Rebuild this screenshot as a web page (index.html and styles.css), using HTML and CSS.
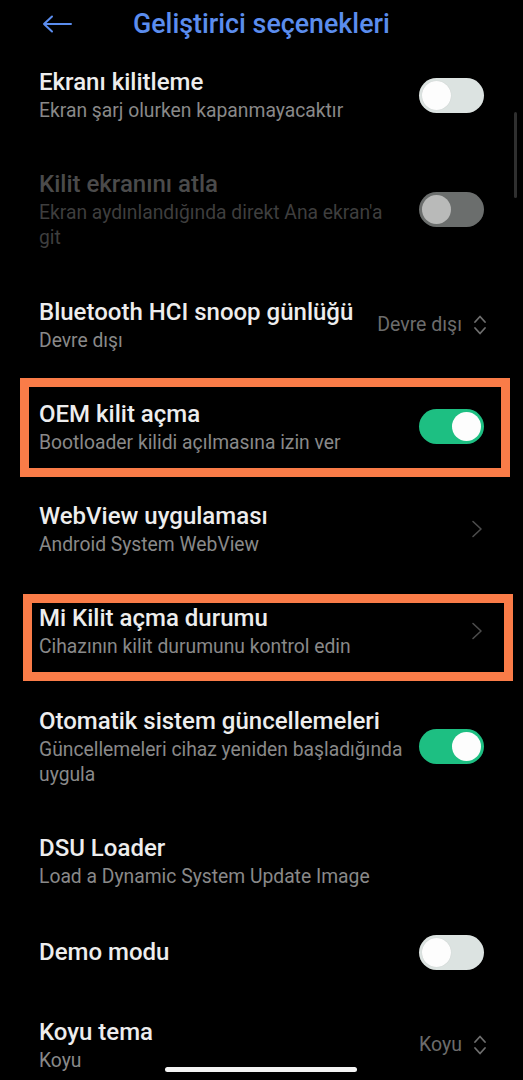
FILE: index.html
```html
<!DOCTYPE html>
<html lang="tr">
<head>
<meta charset="utf-8">
<title>Geliştirici seçenekleri</title>
<link rel="stylesheet" href="styles.css">
</head>
<body>
<div class="screen">
  <header class="topbar">
    <svg class="back" width="30" height="18" viewBox="0 0 30 18" aria-hidden="true">
      <path d="M2 9 H29 M10 1.5 L2 9 L10 16.5" fill="none" stroke="#5b8dee" stroke-width="2" stroke-linecap="round" stroke-linejoin="round"/>
    </svg>
    <h1 class="page-title">Geliştirici seçenekleri</h1>
  </header>

  <ul class="list">
    <li class="row">
      <div class="text">
        <div class="title">Ekranı kilitleme</div>
        <div class="sub">Ekran şarj olurken kapanmayacaktır</div>
      </div>
      <span class="switch off"><span class="knob"></span></span>
    </li>
    <li class="row disabled">
      <div class="text">
        <div class="title">Kilit ekranını atla</div>
        <div class="sub">Ekran aydınlandığında direkt Ana ekran'a git</div>
      </div>
      <span class="switch dis"><span class="knob"></span></span>
    </li>
    <li class="row">
      <div class="text">
        <div class="title">Bluetooth HCI snoop günlüğü</div>
        <div class="sub">Devre dışı</div>
      </div>
      <span class="value">Devre dışı
        <svg class="updown" width="14" height="22" viewBox="0 0 14 22" aria-hidden="true">
          <path d="M2 8 L7 2.5 L12 8 M2 14 L7 19.5 L12 14" fill="none" stroke="#6e6e6e" stroke-width="1.8" stroke-linecap="round" stroke-linejoin="round"/>
        </svg>
      </span>
    </li>
    <li class="row">
      <div class="text">
        <div class="title">OEM kilit açma</div>
        <div class="sub">Bootloader kilidi açılmasına izin ver</div>
      </div>
      <span class="switch on"><span class="knob"></span></span>
      <span class="mark mark-oem"></span>
    </li>
    <li class="row">
      <div class="text">
        <div class="title">WebView uygulaması</div>
        <div class="sub">Android System WebView</div>
      </div>
      <svg class="chev" width="12" height="18" viewBox="0 0 12 18" aria-hidden="true">
        <path d="M2 1.5 L10 9 L2 16.5" fill="none" stroke="#4c4c4c" stroke-width="1.6" stroke-linecap="round" stroke-linejoin="round"/>
      </svg>
    </li>
    <li class="row">
      <div class="text">
        <div class="title">Mi Kilit açma durumu</div>
        <div class="sub">Cihazının kilit durumunu kontrol edin</div>
      </div>
      <svg class="chev" width="12" height="18" viewBox="0 0 12 18" aria-hidden="true">
        <path d="M2 1.5 L10 9 L2 16.5" fill="none" stroke="#4c4c4c" stroke-width="1.6" stroke-linecap="round" stroke-linejoin="round"/>
      </svg>
      <span class="mark mark-mi"></span>
    </li>
    <li class="row">
      <div class="text">
        <div class="title">Otomatik sistem güncellemeleri</div>
        <div class="sub">Güncellemeleri cihaz yeniden başladığında uygula</div>
      </div>
      <span class="switch on"><span class="knob"></span></span>
    </li>
    <li class="row">
      <div class="text">
        <div class="title">DSU Loader</div>
        <div class="sub">Load a Dynamic System Update Image</div>
      </div>
    </li>
    <li class="row">
      <div class="text">
        <div class="title">Demo modu</div>
      </div>
      <span class="switch off"><span class="knob"></span></span>
    </li>
    <li class="row">
      <div class="text">
        <div class="title">Koyu tema</div>
        <div class="sub">Koyu</div>
      </div>
      <span class="value">Koyu
        <svg class="updown" width="14" height="22" viewBox="0 0 14 22" aria-hidden="true">
          <path d="M2 8 L7 2.5 L12 8 M2 14 L7 19.5 L12 14" fill="none" stroke="#6e6e6e" stroke-width="1.8" stroke-linecap="round" stroke-linejoin="round"/>
        </svg>
      </span>
    </li>
  </ul>

  <div class="scrollbar"></div>
  <div class="home-bar"></div>
</div>
</body>
</html>
```

FILE: styles.css
```css
* { box-sizing: border-box; }

html, body {
  margin: 0;
  padding: 0;
  background: #000;
}

body {
  font-family: Roboto, "Noto Sans", "Liberation Sans", sans-serif;
  color: #ededed;
}

.screen {
  position: relative;
  width: 523px;
  height: 1080px;
  overflow: hidden;
  background: #000;
}

.topbar {
  display: flex;
  align-items: center;
  gap: 61px;
  height: 44px;
  padding: 4px 0 0 42px;
}

.back { display: block; flex: none; }

.page-title {
  margin: 0;
  font-size: 26.8px;
  font-weight: 500;
  color: #5b8dee;
  line-height: 40px;
}

.list {
  list-style: none;
  margin: 0;
  padding: 0;
}

.row {
  position: relative;
  display: flex;
  align-items: center;
  gap: 10px;
  padding: 23px 39px 23.3px 39px;
}

.text {
  flex: 1;
  min-width: 0;
}

.title {
  font-size: 24px;
  font-weight: 500;
  line-height: 31px;
  color: #ededed;
}

.sub {
  font-size: 19.3px;
  font-weight: 400;
  line-height: 25px;
  color: #898989;
}

.row.disabled .title { color: #4b4b4b; }
.row.disabled .sub { color: #3e3e3e; }

.switch {
  position: relative;
  flex: none;
  width: 65px;
  height: 35px;
  border-radius: 18px;
}

.switch .knob {
  position: absolute;
  top: 3px;
  width: 29px;
  height: 29px;
  border-radius: 50%;
  background: #fdfdfd;
}

.switch.off { background: #dce3e1; }
.switch.off .knob { left: 3px; box-shadow: 0 0 1px rgba(0,0,0,0.15); }

.switch.dis { background: #6b6e6d; }
.switch.dis .knob { left: 3px; background: #b9bab9; }

.switch.on { background: #1dbf82; }
.switch.on .knob { right: 3px; }

.value {
  flex: none;
  display: flex;
  align-items: center;
  gap: 11px;
  font-size: 19.5px;
  color: #6c6c6c;
  margin-right: -3px;
}

.updown { display: block; }

.chev {
  display: block;
  flex: none;
  margin-right: 1px;
}

.mark {
  position: absolute;
  border: 9px solid #fa7c48;
  width: 490px;
  pointer-events: none;
}

.mark-oem {
  left: 20px;
  top: 2px;
  height: 99px;
}

.mark-mi {
  left: 23px;
  top: 14px;
  height: 87px;
}

.scrollbar {
  position: absolute;
  left: 514px;
  top: 112px;
  width: 3px;
  height: 86px;
  border-radius: 2px;
  background: #2f2f2f;
}

.home-bar {
  position: absolute;
  left: 165px;
  top: 1067px;
  width: 192px;
  height: 5px;
  border-radius: 3px;
  background: #f4f4f4;
}
```
